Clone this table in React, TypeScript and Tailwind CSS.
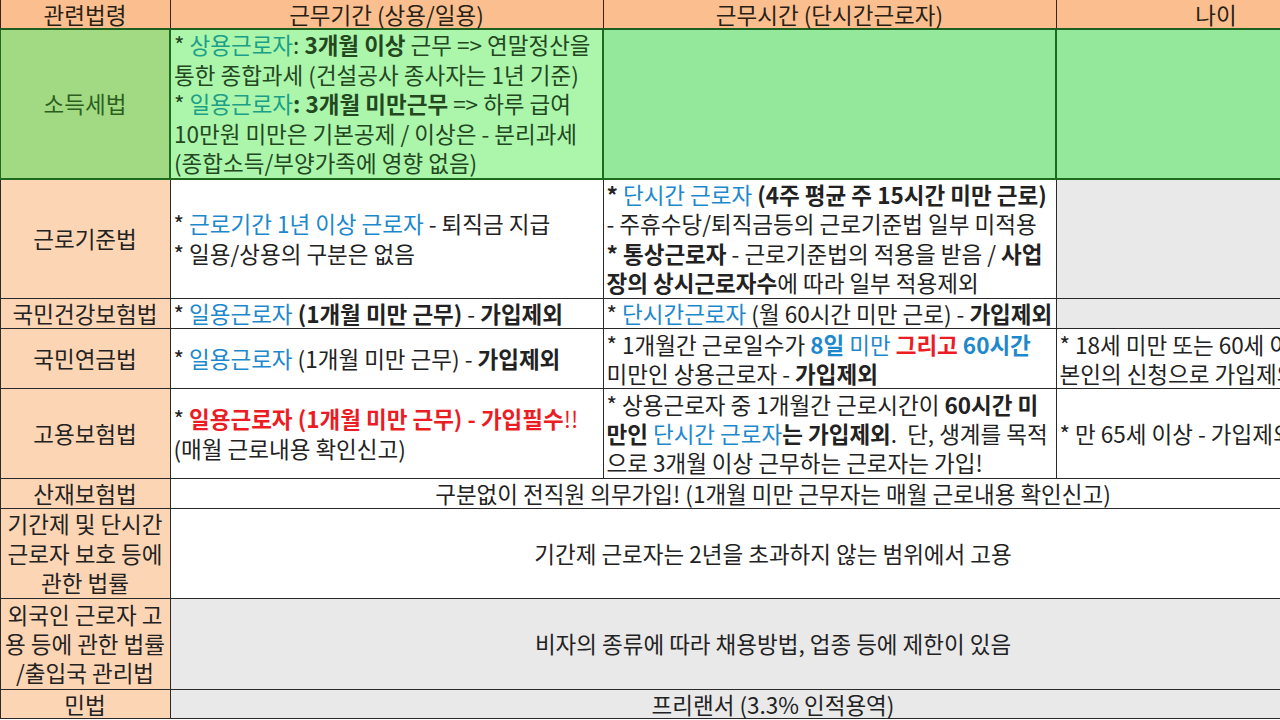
import React from 'react';

const blue = 'text-[#1d88cc]';
const red = 'text-[#ec1c24]';

export default function App() {
  const label = 'bg-[#fcd5b4] text-center text-[#222] border border-[#2a2a2a] px-0 py-0 whitespace-nowrap';
  const cell = 'border border-[#2a2a2a] px-[3px] py-0 text-[#222] whitespace-nowrap align-middle';
  const gray = 'bg-[#e9e9e9]';
  const head = 'text-center py-0 border-x border-[#3a2418] border-b-2 border-b-[#1e5e1e]';
  const green = 'border-2 border-[#1e6b1e] py-0';

  return (
    <div className="w-[1280px] h-[720px] overflow-hidden bg-white font-['Noto_Sans_CJK_KR',sans-serif] text-[22.5px] leading-[29.4px]">
      <table className="table-fixed border-collapse w-[1375px] -ml-[1px]">
        <colgroup>
          <col className="w-[170px]" />
          <col className="w-[433px]" />
          <col className="w-[453px]" />
          <col className="w-[320px]" />
        </colgroup>
        <tbody>
          {/* header */}
          <tr className="h-[29px] bg-[#fbbf8f] text-[#2a1f16] leading-[28px]">
            <td className={head}>관련법령</td>
            <td className={head}>근무기간 (상용/일용)</td>
            <td className={head}>근무시간 (단시간근로자)</td>
            <td className={head}>나이</td>
          </tr>

          {/* 소득세법 */}
          <tr className="h-[150px]">
            <td className={`${green} bg-[#a2da83] text-center text-[#2c5f1f]`}>소득세법</td>
            <td className={`${green} bg-[#abf6ab] text-[#23471f] px-[3px] whitespace-nowrap`}>
              * <span className="text-[#1ba088]">상용근로자</span>: <b>3개월 이상</b> 근무 =&gt; 연말정산을
              <br />
              통한 종합과세 (건설공사 종사자는 1년 기준)
              <br />
              * <span className="text-[#1ba088]">일용근로자</span><b>: 3개월 미만근무</b> =&gt; 하루 급여
              <br />
              10만원 미만은 기본공제 / 이상은 - 분리과세
              <br />
              (종합소득/부양가족에 영향 없음)
            </td>
            <td className={`${green} bg-[#94e89c]`}></td>
            <td className={`${green} bg-[#94e89c]`}></td>
          </tr>

          {/* 근로기준법 */}
          <tr className="h-[118px]">
            <td className={label}>근로기준법</td>
            <td className={cell}>
              * <span className={blue}>근로기간 1년 이상 근로자</span> - 퇴직금 지급
              <br />* 일용/상용의 구분은 없음
            </td>
            <td className={cell}>
              <b>*</b> <span className={blue}>단시간 근로자</span> <b>(4주 평균 주 15시간 미만 근로)</b>
              <br />- 주휴수당/퇴직금등의 근로기준법 일부 미적용
              <br />
              <b>* 통상근로자</b> - 근로기준법의 적용을 받음 / <b>사업</b>
              <br />
              <b>장의 상시근로자수</b>에 따라 일부 적용제외
            </td>
            <td className={`${cell} ${gray}`}></td>
          </tr>

          {/* 국민건강보험법 */}
          <tr className="h-[30px]">
            <td className={label}>국민건강보험법</td>
            <td className={cell}>
              * <span className={blue}>일용근로자</span> <b>(1개월 미만 근무)</b> - <b>가입제외</b>
            </td>
            <td className={cell}>
              * <span className={blue}>단시간근로자</span> (월 60시간 미만 근로) - <b>가입제외</b>
            </td>
            <td className={`${cell} ${gray}`}></td>
          </tr>

          {/* 국민연금법 */}
          <tr className="h-[60px]">
            <td className={label}>국민연금법</td>
            <td className={cell}>
              * <span className={blue}>일용근로자</span> (1개월 미만 근무) - <b>가입제외</b>
            </td>
            <td className={`${cell} leading-[29px]`}>
              * 1개월간 근로일수가 <span className={blue}><b>8일</b> 미만</span>{' '}
              <b className={red}>그리고</b> <b className={blue}>60시간</b>
              <br />
              미만인 상용근로자 - <b>가입제외</b>
            </td>
            <td className={`${cell} leading-[29px]`}>
              * 18세 미만 또는 60세 이상
              <br />
              본인의 신청으로 가입제외
            </td>
          </tr>

          {/* 고용보험법 */}
          <tr className="h-[90px]">
            <td className={label}>고용보험법</td>
            <td className={cell}>
              * <b className={red}>일용근로자 (1개월 미만 근무) - 가입필수</b>
              <span className={red}>!!</span>
              <br />
              (매월 근로내용 확인신고)
            </td>
            <td className={`${cell} leading-[29px]`}>
              * 상용근로자 중 1개월간 근로시간이 <b>60시간 미</b>
              <br />
              <b>만인</b> <span className={blue}>단시간 근로자</span>
              <b>는 가입제외</b>.&nbsp; 단, 생계를 목적
              <br />
              으로 3개월 이상 근무하는 근로자는 가입!
            </td>
            <td className={cell}>* 만 65세 이상 - 가입제외</td>
          </tr>

          {/* 산재보험법 */}
          <tr className="h-[30px]">
            <td className={label}>산재보험법</td>
            <td colSpan={3} className={`${cell} text-center`}>
              구분없이 전직원 의무가입! (1개월 미만 근무자는 매월 근로내용 확인신고)
            </td>
          </tr>

          {/* 기간제 */}
          <tr className="h-[89px]">
            <td className={label}>
              기간제 및 단시간
              <br />
              근로자 보호 등에
              <br />
              관한 법률
            </td>
            <td colSpan={3} className={`${cell} text-center`}>
              기간제 근로자는 2년을 초과하지 않는 범위에서 고용
            </td>
          </tr>

          {/* 외국인 */}
          <tr className="h-[91px]">
            <td className={label}>
              외국인 근로자 고
              <br />
              용 등에 관한 법률
              <br />
              /출입국 관리법
            </td>
            <td colSpan={3} className={`${cell} ${gray} text-center`}>
              비자의 종류에 따라 채용방법, 업종 등에 제한이 있음
            </td>
          </tr>

          {/* 민법 */}
          <tr className="h-[29px]">
            <td className={`${label} leading-[28px]`}>민법</td>
            <td colSpan={3} className={`${cell} ${gray} text-center leading-[28px]`}>
              프리랜서 (3.3% 인적용역)
            </td>
          </tr>
        </tbody>
      </table>
    </div>
  );
}
